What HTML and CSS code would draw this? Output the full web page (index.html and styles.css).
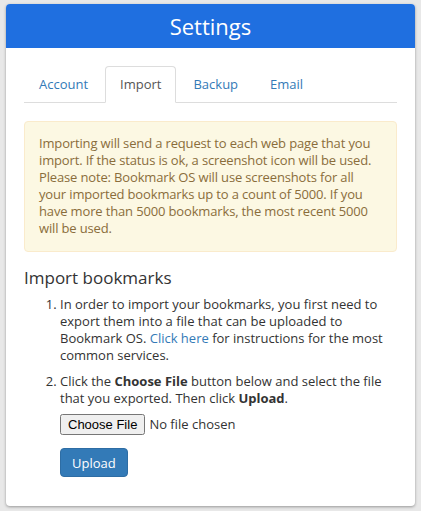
FILE: index.html
```html
<!DOCTYPE html>
<html lang="en">
<head>
  <meta charset="UTF-8">
  <meta name="viewport" content="width=device-width, initial-scale=1.0">
  <title>Settings</title>
  <link rel="stylesheet" href="styles.css">
</head>
<body>
  <div class="settings-card">
    <div class="settings-header">Settings</div>

    <div class="settings-body">
      <ul class="nav-tabs">
        <li class="nav-tab"><a href="#">Account</a></li>
        <li class="nav-tab active"><a href="#">Import</a></li>
        <li class="nav-tab"><a href="#">Backup</a></li>
        <li class="nav-tab"><a href="#">Email</a></li>
      </ul>

      <div class="alert-warning">
        Importing will send a request to each web page that you import. If the status is ok, a screenshot icon will be used. Please note: Bookmark OS will use screenshots for all your imported bookmarks up to a count of 5000. If you have more than 5000 bookmarks, the most recent 5000 will be used.
      </div>

      <h3 class="section-title">Import bookmarks</h3>

      <ol class="steps">
        <li>In order to import your bookmarks, you first need to export them into a file that can be uploaded to Bookmark OS. <a href="#">Click here</a> for instructions for the most common services.</li>
        <li>
          Click the <b>Choose File</b> button below and select the file that you exported. Then click <b>Upload</b>.
          <div class="file-row">
            <input type="file" class="file-input">
          </div>
          <button class="btn-upload">Upload</button>
        </li>
      </ol>
    </div>
  </div>
</body>
</html>
```

FILE: styles.css
```css
* {
  box-sizing: border-box;
}

body {
  margin: 0;
  padding: 4px 6px;
  background: #e8e8e8;
  font-family: 'Open Sans', sans-serif;
  font-size: 13px;
  color: #333;
}

.settings-card {
  background: #fff;
  border-radius: 4px;
  box-shadow: 0 1px 3px rgba(0, 0, 0, 0.35);
  overflow: hidden;
  height: 502px;
}

.settings-header {
  background: #1f6fe0;
  color: #fff;
  height: 44px;
  line-height: 44px;
  text-align: center;
  font-size: 22px;
}

.settings-body {
  padding: 18px 18px 20px;
}

/* tabs */
.nav-tabs {
  list-style: none;
  margin: 0;
  padding: 0;
  display: flex;
  border-bottom: 1px solid #ddd;
}

.nav-tab {
  margin: 0 2px -1px 0;
}

.nav-tab a {
  display: block;
  padding: 8px 14px 9px;
  line-height: 18px;
  color: #337ab7;
  text-decoration: none;
  border: 1px solid transparent;
  border-radius: 4px 4px 0 0;
}

.nav-tab.active a {
  color: #555;
  background: #fff;
  border-color: #ddd #ddd transparent;
}

/* notice box */
.alert-warning {
  margin-top: 18px;
  padding: 13px 14px 14px;
  background: #fcf8e3;
  border: 1px solid #faebcc;
  border-radius: 4px;
  color: #8a6d3b;
  line-height: 17px;
  letter-spacing: -0.15px;
}

.section-title {
  margin: 16px 0 8px;
  font-size: 17px;
  font-weight: 400;
  line-height: 20px;
}

.steps {
  margin: 0;
  padding-left: 36px;
  line-height: 17px;
}

.steps li + li {
  margin-top: 9px;
}

.steps a {
  color: #337ab7;
  text-decoration: none;
}

.file-row {
  margin-top: 7px;
}

.file-input {
  font-family: 'Open Sans', sans-serif;
  font-size: 13px;
}

.file-input::file-selector-button {
  font-family: Arial, 'Liberation Sans', sans-serif;
  font-size: 13px;
}

.btn-upload {
  margin-top: 13px;
  padding: 0 11px;
  background: #337ab7;
  border: 1px solid #2e6da4;
  border-radius: 4px;
  color: #fff;
  font-family: 'Open Sans', sans-serif;
  font-size: 13px;
  height: 29px;
}
```
